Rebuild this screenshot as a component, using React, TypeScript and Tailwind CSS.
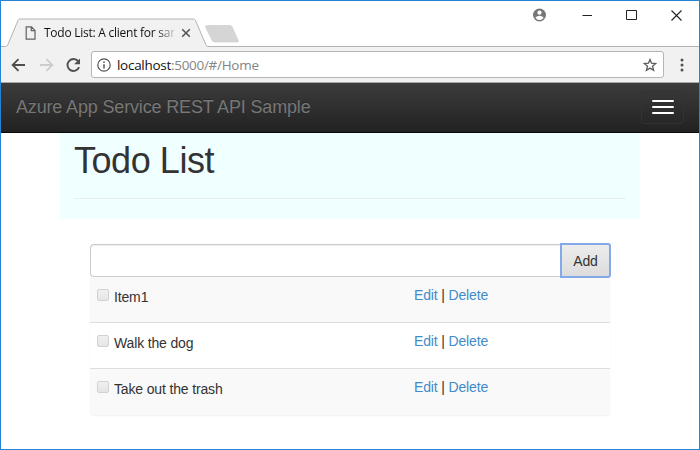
import React from "react";

const items = ["Item1", "Walk the dog", "Take out the trash"];

function TabStrip() {
  return (
    <div className="relative flex h-[46px] shrink-0 bg-white">
      <svg className="absolute left-0 top-0" width="698" height="46" viewBox="1 1 698 46" fill="none">
        <path d="M1 46.5H5.5Q7 46.5 7.7 45L18 20.5Q18.7 19 20 19H193Q194.8 19 195.5 20.5L206 45Q206.7 46.5 208 46.5H699V47H1Z" fill="#f1f1f1" />
        <path d="M1 46.5H5.5Q7 46.5 7.7 45L18 20.5Q18.7 19 20 19H193Q194.8 19 195.5 20.5L206 45Q206.7 46.5 208 46.5H699" stroke="#b3b3b3" />
        <path d="M208 25.5H230Q231.5 25.5 232.2 27L238.2 40.5Q238.8 42 237 42H215Q213 42 212.2 40.5L205.5 27Q205 25.5 208 25.5Z" fill="#d5d5d5" stroke="#c9c9c9" strokeWidth=".6" />
      </svg>
      <div className="relative mt-[18px] ml-6 flex h-[27px] w-[168px] items-center">
        <svg width="11" height="14" viewBox="0 0 11 14" fill="none" stroke="#626262" strokeWidth="1.2">
          <path d="M1.2 .8H6.5L10 4.4V13.1H1.2Z M6.3 .8V4.6H10" />
        </svg>
        <div className="ml-2 w-[130px] overflow-hidden whitespace-nowrap bg-linear-to-r from-[#111] from-[86%] to-[#11111130] bg-clip-text font-['Open_Sans',sans-serif] text-[12px] tracking-[-0.25px] text-transparent">
          Todo List: A client for sam
        </div>
        <svg className="ml-[7px] shrink-0" width="10" height="10" viewBox="0 0 10 10" stroke="#555" strokeWidth="1.6">
          <path d="M1.2 1.2L8.8 8.8M8.8 1.2L1.2 8.8" />
        </svg>
      </div>
      <div className="relative ml-auto flex h-7 items-center pr-[17px]">
        <svg width="14" height="14" viewBox="0 0 14 14">
          <circle cx="7.5" cy="7" r="6.5" fill="#777" />
          <circle cx="7.5" cy="4.7" r="2.1" fill="#fff" />
          <path d="M3.3 9.7Q4.9 7.7 7.5 7.7T11.7 9.7Q10.1 12 7.5 12T3.3 9.7Z" fill="#fff" />
        </svg>
        <svg className="ml-9" width="10" height="11" viewBox="0 0 10 11" stroke="#222"><path d="M.5 5.5H10" /></svg>
        <svg className="ml-[34px]" width="11" height="11" viewBox="0 0 11 11" fill="none" stroke="#222"><path d="M.5 .5H10.5V9.5H.5Z" /></svg>
        <svg className="ml-[34px]" width="11" height="11" viewBox="0 0 11 11" stroke="#222" strokeWidth="1.1"><path d="M.5 .5L10.5 10.5M10.5 .5L.5 10.5" /></svg>
      </div>
    </div>
  );
}

function Toolbar() {
  return (
    <div className="flex h-9 shrink-0 items-center border-b border-[#a8a8a8] bg-[#f1f1f1] pl-[10px]">
      <svg width="15" height="14" viewBox="0 0 15 14" fill="none" stroke="#4e4e4e" strokeWidth="1.8"><path d="M14 7H2M7.5 1.1L1.6 7L7.5 12.9" /></svg>
      <svg className="ml-[13px]" width="15" height="14" viewBox="0 0 15 14" fill="none" stroke="#cdcdcd" strokeWidth="1.8"><path d="M1 7H13M7.5 1.1L13.4 7L7.5 12.9" /></svg>
      <svg className="ml-3" width="15" height="14" viewBox="0 0 15 14" fill="none">
        <path d="M12.2 3.2A6 6 0 1 0 13.1 9.2" stroke="#505050" strokeWidth="1.9" />
        <path d="M14 .4V6.3H8.1Z" fill="#505050" />
      </svg>
      <div className="ml-[10px] flex h-[27px] w-[573px] items-center rounded-[3px] border border-[#b5b5b5] bg-white pl-[5px] pr-[6px]">
        <svg width="14" height="14" viewBox="0 0 14 14" fill="none" stroke="#555" strokeWidth="1.2">
          <circle cx="7" cy="7" r="6.2" />
          <path d="M7 6.2V10.4M7 3.5V5" strokeWidth="1.5" />
        </svg>
        <div className="ml-[6px] font-['Open_Sans',sans-serif] text-[13.5px] tracking-[-0.29px] text-[#858585]">
          <span className="text-[#111]">localhost</span>:5000/#/Home
        </div>
        <svg className="ml-auto" width="14" height="14" viewBox="0 0 14 14" fill="none" stroke="#5d5d5d" strokeWidth="1.3">
          <path d="M7 1.5L8.5 5.2L12.8 5.5L9.5 8.2L10.6 12.4L7 10.1L3.4 12.4L4.5 8.2L1.2 5.5L5.5 5.2Z" />
        </svg>
      </div>
      <svg className="ml-[16px]" width="4" height="14" viewBox="0 0 4 14" fill="#505050">
        <circle cx="2" cy="2" r="1.5" /><circle cx="2" cy="7" r="1.5" /><circle cx="2" cy="12" r="1.5" />
      </svg>
    </div>
  );
}

export default function App() {
  return (
    <div className="flex h-[450px] w-[700px] flex-col overflow-hidden border border-[#2585d5] bg-white font-['Liberation_Sans',Arial,sans-serif] text-[14px] leading-5 text-[#333]">
      <TabStrip />
      <Toolbar />
      <nav className="flex h-[50px] shrink-0 items-center border-b border-[#080808] bg-linear-to-b from-[#3c3c3c] to-[#222] pl-[15px] pr-[15px]">
        <span className="-mt-[2px] text-[18px] tracking-[-0.16px] text-[#777] text-shadow-[0_-1px_0_rgb(0_0_0/0.25)]">Azure App Service REST API Sample</span>
        <button aria-label="Menu" className="-mt-px ml-auto flex h-[33px] w-[43px] flex-col items-center justify-center gap-1 rounded border border-[#333]">
          <span className="h-[2px] w-[22px] rounded-[1px] bg-white" />
          <span className="h-[2px] w-[22px] rounded-[1px] bg-white" />
          <span className="h-[2px] w-[22px] rounded-[1px] bg-white" />
        </button>
      </nav>
      <header className="mx-auto h-[86px] w-[580px] shrink-0 bg-[#f0ffff] px-[14px] pt-[8px]">
        <h1 className="text-[36px] leading-10 tracking-[-0.45px]">Todo List</h1>
        <hr className="mt-[17px] border-[#e8eeee]" />
      </header>
      <main className="ml-[89px] mt-[25px] w-[520px] tracking-[-0.15px]">
        <div className="flex h-[33px]">
          <input aria-label="New item" className="w-[470px] shrink-0 rounded-l border border-r-0 border-[#ccc] shadow-[inset_0_1px_1px_rgb(0_0_0/0.075)]" />
          <button className="-my-px h-[35px] w-[51px] shrink-0 rounded-r-[3px] border-2 border-[#84a9e8] bg-linear-to-b from-[#ededed] to-[#dcdcdc]">Add</button>
        </div>
        <div className="rounded-b shadow-[0_1px_2px_rgb(0_0_0/0.06)]">
          {items.map((item) => (
            <div key={item} className="flex h-[46px] border-b border-[#ddd] bg-white pl-[7px] pt-2 odd:bg-[#f9f9f9] last:rounded-b last:border-transparent">
              <label className="flex w-[317px]">
                <span className="mt-[4px] mr-[5px] h-3 w-3 rounded-[2px] border border-[#d2d2d2] bg-linear-to-b from-[#f0f0f0] to-[#e5e5e5]" />
                <span className="mt-[2px]">{item}</span>
              </label>
              <div><a className="text-[#428bca]">Edit</a> | <a className="text-[#428bca]">Delete</a></div>
            </div>
          ))}
        </div>
      </main>
    </div>
  );
}
